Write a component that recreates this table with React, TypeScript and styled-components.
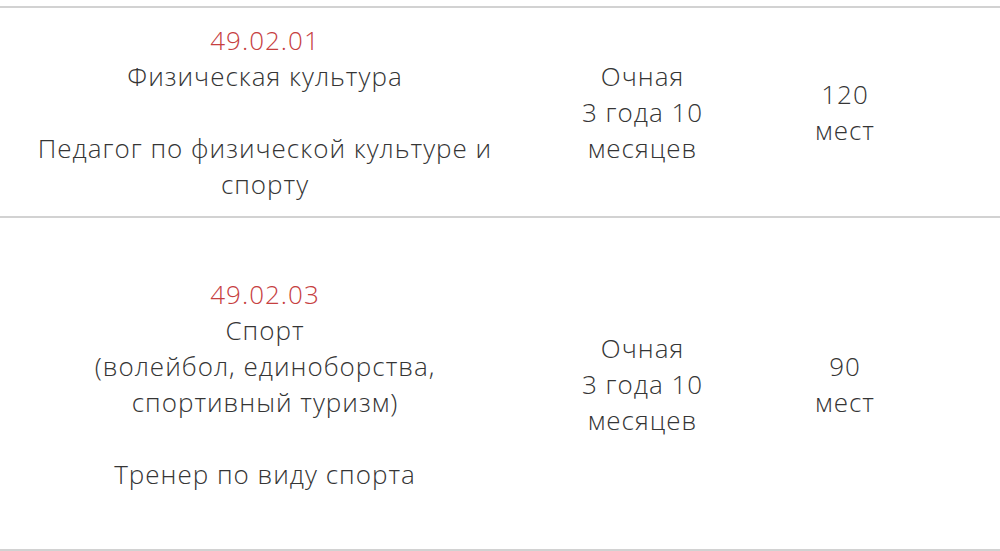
import styled, { createGlobalStyle } from 'styled-components';

const GlobalStyle = createGlobalStyle`
  html, body {
    margin: 0;
    padding: 0;
    background: #fff;
  }
  body {
    font-family: "Open Sans", Lato, "Noto Sans", sans-serif;
    font-weight: 300;
    color: #353535;
  }
`;

const Table = styled.div`
  margin-top: 6px;
  border-top: 2px solid #d2d2d2;
`;

const Row = styled.div<{ $minHeight: number }>`
  display: grid;
  grid-template-columns: 530px 225px 180px 1fr;
  align-items: center;
  min-height: ${(p) => p.$minHeight}px;
  border-bottom: 2px solid #d2d2d2;
`;

const Cell = styled.div`
  text-align: center;
  font-size: 26px;
  line-height: 36px;
  letter-spacing: 1px;
`;

const Code = styled.div`
  color: #c6403f;
`;

const Gap = styled.div`
  height: 36px;
`;

interface Program {
  code: string;
  title: string[];
  qualification: string[];
  form: string[];
  seats: string;
  minHeight: number;
}

const programs: Program[] = [
  {
    code: '49.02.01',
    title: ['Физическая культура'],
    qualification: ['Педагог по физической культуре и', 'спорту'],
    form: ['Очная', '3 года 10', 'месяцев'],
    seats: '120',
    minHeight: 208,
  },
  {
    code: '49.02.03',
    title: ['Спорт', '(волейбол, единоборства,', 'спортивный туризм)'],
    qualification: ['Тренер по виду спорта'],
    form: ['Очная', '3 года 10', 'месяцев'],
    seats: '90',
    minHeight: 331,
  },
];

export default function App() {
  return (
    <>
      <GlobalStyle />
      <Table>
        {programs.map((p) => (
          <Row key={p.code} $minHeight={p.minHeight}>
            <Cell>
              <Code>{p.code}</Code>
              {p.title.map((t) => (
                <div key={t}>{t}</div>
              ))}
              <Gap />
              {p.qualification.map((t) => (
                <div key={t}>{t}</div>
              ))}
            </Cell>
            <Cell>
              {p.form.map((t) => (
                <div key={t}>{t}</div>
              ))}
            </Cell>
            <Cell>
              <div>{p.seats}</div>
              <div>мест</div>
            </Cell>
            <Cell />
          </Row>
        ))}
      </Table>
    </>
  );
}
